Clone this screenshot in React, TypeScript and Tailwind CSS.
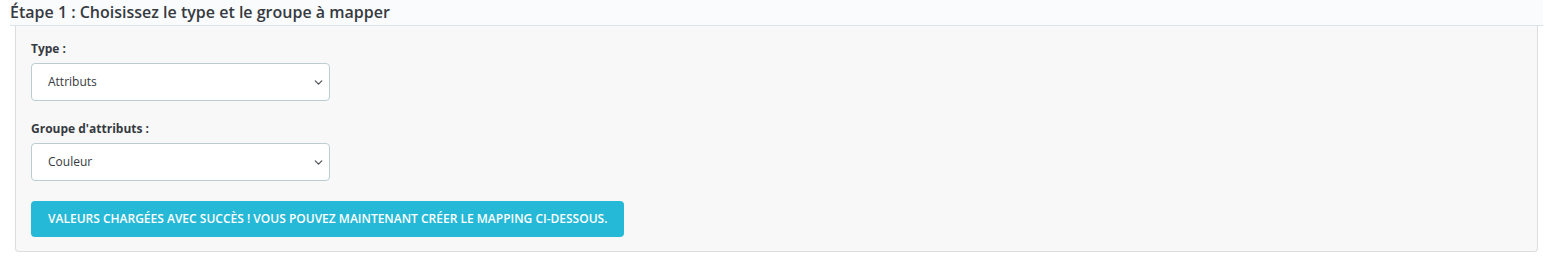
import { ChevronDown } from 'lucide-react';

const FIELDS = [
  { label: 'Type :', value: 'Attributs' },
  { label: "Groupe d'attributs :", value: 'Couleur' },
];

export default function App() {
  return (
    <div className="min-h-[260px] bg-white font-['Open_Sans',sans-serif] text-[#363a41]">
      <div className="ml-[10px] mr-[7px] h-[26px] bg-[#fafbfc] border-b border-[#dde4e8]">
        <h2 className="text-[16px] font-semibold leading-[24px]">Étape 1 : Choisissez le type et le groupe à mapper</h2>
      </div>

      <div className="ml-[15px] mr-[12px] bg-[#f8f8f8] border border-t-0 border-[#dddddd] rounded-b-[4px] px-[15px] pt-[14px] pb-[14px]">
        {FIELDS.map((f, i) => (
          <div key={f.label} className={i === 0 ? 'mb-[19px]' : 'mb-[20px]'}>
            <label className="block text-[12px] font-bold leading-[17px] mb-[6px]">{f.label}</label>
            <div className="relative w-[299px] h-[38px] bg-white border border-[#bbcdd2] rounded-[4px] flex items-center pl-[16px]">
              <span className="text-[12px]">{f.value}</span>
              <ChevronDown className="absolute right-[4px] top-[12px] w-[13px] h-[13px] text-[#4a4f55]" strokeWidth={2.25} />
            </div>
          </div>
        ))}

        <div className="inline-flex items-center h-[36px] px-[17px] bg-[#25b9d7] rounded-[4px] text-white text-[12px] font-semibold uppercase">
          Valeurs chargées avec succès ! Vous pouvez maintenant créer le mapping ci-dessous.
        </div>
      </div>
    </div>
  );
}
